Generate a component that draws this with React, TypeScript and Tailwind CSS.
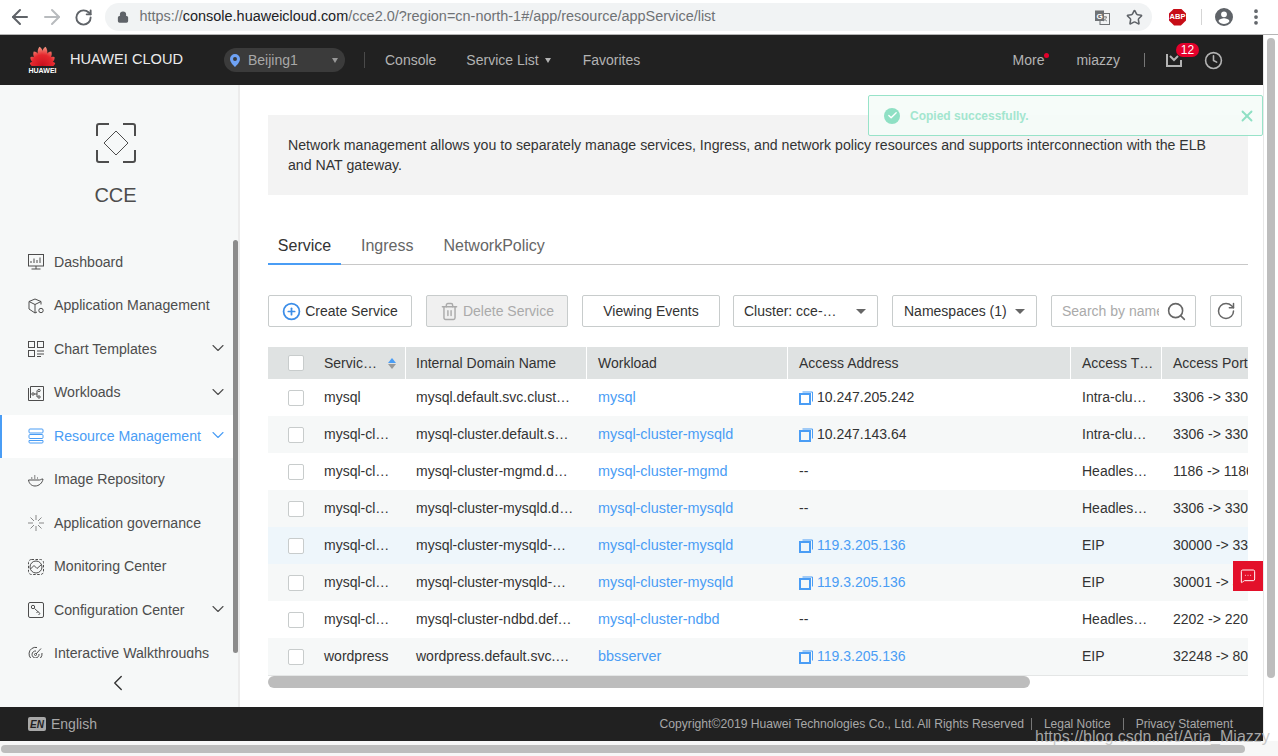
import { ArrowLeft, ArrowRight, ChevronDown, ChevronLeft, Clock, Lock, MoreVertical, RotateCw, Search, Star, Trash2, Check, X, MessageSquareMore, CirclePlus } from "lucide-react";

type IconProps = { className?: string };

function Svg({ className, children }: IconProps & { children: React.ReactNode }) {
  return (
    <svg viewBox="0 0 16 16" fill="none" stroke="currentColor" strokeWidth="1" className={className}>
      {children}
    </svg>
  );
}

const navItems: { label: string; chevron?: boolean; active?: boolean; icon: React.ReactNode }[] = [
  {
    label: "Dashboard",
    icon: <><rect x="0.5" y="0.5" width="15" height="11.5" /><path d="M3 9V7M6 9V4.500M9 9V6M12 9V3.500M8 12v3M3.500 15h9" /></>,
  },
  {
    label: "Application Management",
    icon: <><path d="M7 1 1 3.500v7.500L7 15l2-1M7 1l6 2.500v3M1 3.500 7 6.500l6-3M7 6.500V15" /><circle cx="13" cy="12.500" r="2.200" /></>,
  },
  {
    label: "Chart Templates",
    chevron: true,
    icon: <><rect x="0.500" y="0.500" width="6" height="6" /><rect x="9.500" y="0.500" width="6" height="6" /><rect x="0.500" y="9.500" width="6" height="6" /><path d="M9 10h7M9 13h7M9 15.500h4" /></>,
  },
  {
    label: "Workloads",
    chevron: true,
    icon: <><path d="M0.500 3V15.500H15.500V1.500H2.500V13" /><circle cx="5" cy="9" r="1.200" /><circle cx="11" cy="5.500" r="1.200" /><circle cx="11" cy="12" r="1.200" /><path d="M6 9h3V5.500M9 9v3" /></>,
  },
  {
    label: "Resource Management",
    chevron: true,
    active: true,
    icon: <><rect x="1" y="1" width="14" height="4" rx="1" /><rect x="1" y="6.500" width="14" height="4" rx="1" /><path d="M1 12.500h14v1.500a1 1 0 0 1-1 1H2a1 1 0 0 1-1-1z" /></>,
  },
  {
    label: "Image Repository",
    icon: <><path d="M0.500 8h11c1 0 1.500-1 3.500-1-.5 4-4 7-8 7-3.500 0-6-2.500-6.500-6z" /><path d="M3 6h2M6 6h2M6 4h2M9 6h1" strokeDasharray="1 .6" /></>,
  },
  {
    label: "Application governance",
    icon: <g opacity="0.65"><path d="M8 0v5M8 11v5M0 8h5M11 8h5M2.500 2.500 6 6M13.500 2.500 10 6M2.500 13.500 6 10M13.500 13.500 10 10" /></g>,
  },
  {
    label: "Monitoring Center",
    icon: <><rect x="0.500" y="0.500" width="15" height="15" rx="3" strokeDasharray="2.500 1.500" /><circle cx="8" cy="8" r="6" /><path d="M2.500 10 6 6.500 9 9.500l4.500-4" /></>,
  },
  {
    label: "Configuration Center",
    chevron: true,
    icon: <><rect x="0.500" y="0.500" width="15" height="15" rx="1.500" /><circle cx="5" cy="5" r="1.700" /><path d="M6.500 6.500 12 11.500M10 9.500 8.500 11M12 11.500 10.500 13" /></>,
  },
  {
    label: "Interactive Walkthroughs",
    icon: <><path d="M14 7a6.500 6.500 0 1 1-5-5.500" /><path d="M11 8a3.500 3.500 0 1 1-3-3" /><circle cx="7.500" cy="8.500" r="1" /><path d="m8 8 5-5.500" /></>,
  },
];

type Row = { name: string; domain: string; workload: string; addr?: string; link?: boolean; type: string; port: string; bg: string };

const rows: Row[] = [
  { name: "mysql", domain: "mysql.default.svc.clust…", workload: "mysql", addr: "10.247.205.242", type: "Intra-clu…", port: "3306 -> 3306", bg: "bg-white" },
  { name: "mysql-cl…", domain: "mysql-cluster.default.s…", workload: "mysql-cluster-mysqld", addr: "10.247.143.64", type: "Intra-clu…", port: "3306 -> 3306", bg: "bg-[#f6f8f8]" },
  { name: "mysql-cl…", domain: "mysql-cluster-mgmd.d…", workload: "mysql-cluster-mgmd", type: "Headles…", port: "1186 -> 1186", bg: "bg-white" },
  { name: "mysql-cl…", domain: "mysql-cluster-mysqld.d…", workload: "mysql-cluster-mysqld", type: "Headles…", port: "3306 -> 3306", bg: "bg-[#f6f8f8]" },
  { name: "mysql-cl…", domain: "mysql-cluster-mysqld-…", workload: "mysql-cluster-mysqld", addr: "119.3.205.136", link: true, type: "EIP", port: "30000 -> 3306", bg: "bg-[#eef6fb]" },
  { name: "mysql-cl…", domain: "mysql-cluster-mysqld-…", workload: "mysql-cluster-mysqld", addr: "119.3.205.136", link: true, type: "EIP", port: "30001 -> 3306", bg: "bg-[#f6f8f8]" },
  { name: "mysql-cl…", domain: "mysql-cluster-ndbd.def…", workload: "mysql-cluster-ndbd", type: "Headles…", port: "2202 -> 2202", bg: "bg-white" },
  { name: "wordpress", domain: "wordpress.default.svc.…", workload: "bbsserver", addr: "119.3.205.136", link: true, type: "EIP", port: "32248 -> 80", bg: "bg-[#f6f8f8]" },
];

const petals: { angle: number; len: number }[] = [
  { angle: -78, len: 13 },
  { angle: -54, len: 15 },
  { angle: -31, len: 17 },
  { angle: -9, len: 19.500 },
  { angle: 9, len: 19.500 },
  { angle: 31, len: 17 },
  { angle: 54, len: 15 },
  { angle: 78, len: 13 },
];

function HuaweiLogo() {
  return (
    <svg viewBox="0 0 27 20" className="h-[20px] w-[27px]">
      <defs>
        <linearGradient id="petal" x1="0" y1="0" x2="0" y2="20" gradientUnits="userSpaceOnUse">
          <stop offset="0" stopColor="#f4a48c" />
          <stop offset="0.45" stopColor="#e5282e" />
          <stop offset="1" stopColor="#c80f1c" />
        </linearGradient>
      </defs>
      {petals.map((p) => (
        <path
          key={p.angle}
          d={`M13.500 20C9.500 ${20 - p.len * 0.5} 10 ${20 - p.len * 0.85} 13.500 ${20 - p.len}C17 ${20 - p.len * 0.85} 17.500 ${20 - p.len * 0.5} 13.500 20z`}
          fill="url(#petal)"
          transform={`rotate(${p.angle} 13.500 20)`}
        />
      ))}
    </svg>
  );
}

function Checkbox() {
  return <span className="block h-[16px] w-[16px] rounded-[2px] border border-[#c8cccc] bg-white" />;
}

function CopyIcon() {
  return (
    <svg viewBox="0 0 14 14" fill="none" stroke="#4a9df5" className="mr-[4px] h-[14px] w-[14px] shrink-0">
      <path d="M3.500 1h10v9.500" />
      <rect x="1" y="3" width="10" height="10" strokeWidth="2" />
    </svg>
  );
}

function Caret() {
  return <span className="h-0 w-0 border-x-[5px] border-t-[5px] border-x-transparent border-t-[#666]" />;
}

function App() {
  return (
    <div className="relative flex h-[756px] w-[1278px] flex-col overflow-hidden bg-white font-['Liberation_Sans',Arial,sans-serif] text-[14px] text-[#333]">
      {/* browser chrome */}
      <div className="flex h-[35px] shrink-0 items-center border-b border-[#b5b5b5] bg-white pl-[8px]">
        <ArrowLeft className="h-[24px] w-[24px] text-[#5f6368]" strokeWidth={2} />
        <ArrowRight className="ml-[8px] h-[24px] w-[24px] text-[#b8bbbe]" strokeWidth={2} />
        <RotateCw className="ml-[10px] h-[19px] w-[19px] text-[#5f6368]" strokeWidth={2.400} />
        <div className="ml-[12px] flex h-[28px] w-[1047px] items-center rounded-full bg-[#f1f3f4] pl-[12px] pr-[9px]">
          <Lock className="h-[12px] w-[12px] fill-[#5f6368] text-[#5f6368]" strokeWidth={2.500} />
          <span className="ml-[10.500px] flex-1 whitespace-nowrap text-[14.450px] text-[#6f7275]">
            https://<span className="text-[#202124]">console.huaweicloud.com</span>/cce2.0/?region=cn-north-1#/app/resource/appService/list
          </span>
          <svg viewBox="0 0 15 15" className="h-[15px] w-[15px]">
            <rect x="5" y="3.500" width="9.500" height="11" fill="#f1f3f4" stroke="#6f7275" />
            <path d="M8 7h4M10 6v1M11.500 7c-.5 2-2 3.500-3.500 4M9 8.500c.5 1 1.500 2 3 2.500" stroke="#6f7275" strokeWidth="0.800" fill="none" />
            <rect x="0" y="0.500" width="9" height="10.500" fill="#6f7275" />
            <text x="4.500" y="8.500" textAnchor="middle" fontSize="8" fontWeight="700" fill="#fff">G</text>
          </svg>
          <Star className="ml-[16.500px] h-[17px] w-[17px] text-[#5f6368]" strokeWidth={2.200} />
        </div>
        <span className="ml-[17px] flex h-[17px] w-[17px] items-center justify-center bg-[#c70d17] text-[7.500px] font-bold text-white [clip-path:polygon(30%_0,70%_0,100%_30%,100%_70%,70%_100%,30%_100%,0_70%,0_30%)]">ABP</span>
        <span className="ml-[15px] h-[16px] w-px bg-[#d5d5d5]" />
        <svg viewBox="0 0 16 16" className="ml-[13px] h-[18px] w-[18px] fill-[#5f6368]">
          <path fillRule="evenodd" d="M8 0a8 8 0 1 0 0 16A8 8 0 0 0 8 0zm0 3a2.600 2.600 0 1 1 0 5.200A2.600 2.600 0 0 1 8 3zm0 11.200c-2 0-3.800-1-4.800-2.500 0-1.600 3.200-2.500 4.800-2.500s4.800.900 4.800 2.500c-1 1.500-2.800 2.500-4.800 2.500z" />
        </svg>
        <MoreVertical className="ml-[13px] h-[20px] w-[20px] text-[#5f6368]" strokeWidth={2.500} />
      </div>

      <div className="flex min-h-0 flex-1">
        <div className="flex min-w-0 flex-1 flex-col">
          {/* console header */}
          <header className="flex h-[50px] shrink-0 items-center bg-[#212121] text-[14px] text-[#b3b3b3]">
            <div className="ml-[29px] flex w-[27px] flex-col items-center">
              <HuaweiLogo />
              <span className="mt-[1px] text-[7px] font-bold leading-[7px] text-white">HUAWEI</span>
            </div>
            <span className="ml-[14px] whitespace-nowrap text-[14.600px] text-[#ececec]">HUAWEI CLOUD</span>
            <div className="ml-[41px] flex h-[24px] w-[121px] items-center rounded-full bg-[#3b3b3b] pl-[6px]">
              <svg viewBox="0 0 10 13" className="h-[13px] w-[10px]">
                <path fillRule="evenodd" fill="#6ea2f5" d="M5 0a5 5 0 0 1 5 5c0 3-3 6-5 8-2-2-5-5-5-8a5 5 0 0 1 5-5zm0 3a2 2 0 1 0 0 4 2 2 0 0 0 0-4z" />
              </svg>
              <span className="ml-[8px] flex-1 text-[#a8a8a8]">Beijing1</span>
              <span className="mr-[7px] h-0 w-0 border-x-[3.500px] border-t-[5px] border-x-transparent border-t-[#999]" />
            </div>
            <span className="ml-[19px] h-[16px] w-px bg-[#4a4a4a]" />
            <span className="ml-[20px]">Console</span>
            <span className="ml-[30px]">Service List</span>
            <span className="ml-[6px] h-0 w-0 border-x-[3.500px] border-t-[5px] border-x-transparent border-t-[#b3b3b3]" />
            <span className="ml-[32px]">Favorites</span>
            <div className="flex-1" />
            <span className="relative">
              More
              <span className="absolute -right-[5px] top-[3px] h-[5px] w-[5px] rounded-full bg-[#e4002b]" />
            </span>
            <span className="ml-[32px]">miazzy</span>
            <span className="ml-[24px] h-[14px] w-px bg-[#777]" />
            <span className="relative ml-[21px] flex">
              <svg viewBox="0 0 16 14" fill="none" stroke="#b3b3b3" strokeWidth="2" className="h-[14px] w-[16px]">
                <path d="M1 1v12h14V7M4 3l4 4 4-4" />
              </svg>
              <span className="absolute -top-[10px] left-[10px] flex h-[14px] w-[23px] items-center justify-center rounded-full bg-[#e4002b] text-[12px] text-white">12</span>
            </span>
            <Clock className="ml-[22px] mr-[40px] h-[19px] w-[19px] text-[#b3b3b3]" strokeWidth={2} />
          </header>

          <div className="flex min-h-0 flex-1">
            {/* sidebar */}
            <aside className="relative flex w-[240px] shrink-0 flex-col border-r-[2px] border-[#ececec] bg-[#f6f8f8]">
              <div className="flex h-[155.500px] shrink-0 flex-col items-center pr-[7px] pt-[38px]">
                <svg viewBox="0 0 40 40" fill="none" stroke="#4d4d4d" className="h-[40px] w-[40px]">
                  <path strokeWidth="2" d="M13 1H3a2 2 0 0 0-2 2v10M27 1h10a2 2 0 0 1 2 2v10M1 27v10a2 2 0 0 0 2 2h10M39 27v10a2 2 0 0 1-2 2H27" />
                  <path strokeWidth="1" d="M20 8 32 20 20 32 8 20z" />
                </svg>
                <span className="mt-[20px] text-[20px] leading-[24px] text-[#4d4d4d]">CCE</span>
              </div>
              <nav className="flex h-[417.500px] shrink-0 flex-col overflow-hidden text-[14.150px]">
                {navItems.map((item) => (
                  <div
                    key={item.label}
                    className={
                      item.active
                        ? "flex h-[43.500px] shrink-0 items-center border-l-[2px] border-[#4a9df5] bg-white pl-[26px] text-[#4a9df5]"
                        : "flex h-[43.500px] shrink-0 items-center pl-[28px] text-[#4d4d4d]"
                    }
                  >
                    <Svg className="h-[16px] w-[16px] shrink-0">{item.icon}</Svg>
                    <span className="ml-[10px] flex-1 whitespace-nowrap">{item.label}</span>
                    {item.chevron && <ChevronDown className="-mt-[2px] mr-[10px] h-[20px] w-[20px]" strokeWidth={1.300} />}
                  </div>
                ))}
              </nav>
              <div className="flex flex-1 items-center justify-center pr-[3px]">
                <ChevronLeft className="h-[26px] w-[26px] text-[#333]" strokeWidth={1.300} />
              </div>
              <span className="absolute right-[0px] top-[155px] h-[413px] w-[5px] rounded-full bg-[#8c8c8c]" />
            </aside>

            {/* content */}
            <main className="min-w-0 flex-1 pl-[28px] pr-[15px] pt-[30px]">
              <div className="h-[80px] bg-[#f3f3f3] pl-[20px] pr-[36px] pt-[20px] text-[14.150px] leading-[20px]">
                Network management allows you to separately manage services, Ingress, and network policy resources and supports interconnection with the ELB and NAT gateway.
              </div>

              <div className="mt-[34px] flex h-[36px] items-end border-b border-[#c8c8c8] text-[16px] text-[#666]">
                <span className="-mb-px flex h-[36px] w-[73px] items-center justify-center border-b-[2px] border-[#4a9df5] text-[#333]">Service</span>
                <span className="mb-[1px] ml-[20px] flex h-[35px] items-center">Ingress</span>
                <span className="mb-[1px] ml-[30px] flex h-[35px] items-center">NetworkPolicy</span>
              </div>

              {/* toolbar */}
              <div className="mt-[30px] flex h-[32px] items-stretch">
                <button className="flex w-[144px] items-center justify-center rounded-[2px] border border-[#c8cccc] bg-white">
                  <CirclePlus className="mr-[4px] h-[19px] w-[19px] text-[#3b8de8]" strokeWidth={2.200} />
                  Create Service
                </button>
                <button className="ml-[14px] flex w-[142px] items-center justify-center rounded-[2px] border border-[#c8cccc] bg-[#f0f0f0] text-[#aaa]">
                  <Trash2 className="mr-[4px] h-[19px] w-[19px]" strokeWidth={1.800} />
                  Delete Service
                </button>
                <button className="ml-[14px] w-[138px] rounded-[2px] border border-[#c8cccc] bg-white">Viewing Events</button>
                <button className="ml-[13px] flex w-[145px] items-center justify-between rounded-[2px] border border-[#c8cccc] bg-white pl-[10px] pr-[11px]">
                  Cluster: cce-…
                  <Caret />
                </button>
                <button className="ml-[14px] flex w-[145px] items-center justify-between rounded-[2px] border border-[#c8cccc] bg-white pl-[11px] pr-[11px]">
                  Namespaces (1)
                  <Caret />
                </button>
                <div className="ml-[14px] flex w-[145px] items-center rounded-[2px] border border-[#c8cccc] bg-white pl-[10px]">
                  <span className="w-[97px] overflow-hidden whitespace-nowrap text-[#aaa]">Search by name</span>
                  <Search className="ml-[7px] h-[21px] w-[21px] text-[#666]" strokeWidth={1.800} />
                </div>
                <button className="ml-[14px] flex w-[32px] items-center justify-center rounded-[2px] border border-[#c8cccc] bg-white">
                  <RotateCw className="h-[20px] w-[20px] text-[#666]" strokeWidth={1.800} />
                </button>
              </div>

              {/* table */}
              <div className="mt-[20px] overflow-hidden border-b border-[#e4e6e6]">
                <div className="grid w-[1060px] grid-cols-[44px_94px_181px_201px_283px_91px_166px]">
                  <div className="flex h-[32px] items-center bg-[#dfe2e2] pl-[20px]"><Checkbox /></div>
                  <div className="flex h-[32px] items-center border-r border-white bg-[#dfe2e2] pl-[12px]">
                    <span>Servic…</span>
                    <span className="ml-[11px] flex flex-col gap-[1px]">
                      <span className="h-0 w-0 border-x-[4px] border-b-[5px] border-x-transparent border-b-[#4a9df5]" />
                      <span className="h-0 w-0 border-x-[4px] border-t-[5px] border-x-transparent border-t-[#999]" />
                    </span>
                  </div>
                  <div className="flex h-[32px] items-center border-r border-white bg-[#dfe2e2] pl-[10px]">Internal Domain Name</div>
                  <div className="flex h-[32px] items-center border-r border-white bg-[#dfe2e2] pl-[11px]">Workload</div>
                  <div className="flex h-[32px] items-center border-r border-white bg-[#dfe2e2] pl-[11px]">Access Address</div>
                  <div className="flex h-[32px] items-center border-r border-white bg-[#dfe2e2] pl-[11px]">Access T…</div>
                  <div className="flex h-[32px] items-center bg-[#dfe2e2] pl-[11px]">Access Port</div>

                  {rows.map((r, i) => (
                    <div key={i} className="contents">
                      <div className={`flex h-[37px] items-center pl-[20px] ${r.bg}`}><Checkbox /></div>
                      <div className={`flex h-[37px] items-center whitespace-nowrap pl-[12px] ${r.bg}`}>{r.name}</div>
                      <div className={`flex h-[37px] items-center whitespace-nowrap pl-[10px] ${r.bg}`}>{r.domain}</div>
                      <div className={`flex h-[37px] items-center pl-[11px] text-[14.400px] text-[#4a9df5] ${r.bg}`}>{r.workload}</div>
                      <div className={`flex h-[37px] items-center pl-[11px] ${r.bg}`}>
                        {r.addr ? (
                          <>
                            <CopyIcon />
                            <span className={r.link ? "text-[#4a9df5]" : ""}>{r.addr}</span>
                          </>
                        ) : (
                          "--"
                        )}
                      </div>
                      <div className={`flex h-[37px] items-center whitespace-nowrap pl-[11px] ${r.bg}`}>{r.type}</div>
                      <div className={`flex h-[37px] items-center whitespace-nowrap pl-[11px] ${r.bg}`}>{r.port}</div>
                    </div>
                  ))}
                </div>
              </div>
              <div className="h-[12px] w-[762px] rounded-full bg-[#bdbdbd]" />
            </main>
          </div>

          {/* footer */}
          <footer className="flex h-[34px] shrink-0 items-center bg-[#212121] pl-[28px] text-[#a8a8a8]">
            <span className="flex h-[14px] w-[18px] items-center justify-center rounded-[2px] bg-[#a8a8a8] text-[10px] font-bold italic text-[#212121]">EN</span>
            <span className="ml-[5px]">English</span>
            <div className="flex-1" />
            <span className="text-[12.150px]">Copyright©2019 Huawei Technologies Co., Ltd. All Rights Reserved</span>
            <span className="ml-[7px] h-[12px] w-px bg-[#777]" />
            <span className="ml-[12px] text-[12px]">Legal Notice</span>
            <span className="ml-[12px] h-[12px] w-px bg-[#777]" />
            <span className="ml-[12px] mr-[30px] text-[12px]">Privacy Statement</span>
          </footer>
        </div>

        {/* page scrollbar */}
        <div className="w-[15px] shrink-0 border-l border-[#e8e8e8] bg-white pl-[3px] pt-[3px]">
          <div className="h-[640px] w-[8px] rounded-full bg-[#bdbdbd]" />
        </div>
      </div>

      <div className="flex h-[15px] shrink-0 items-center bg-[#f7f7f7] pl-[1px]">
        <div className="h-[8px] w-[1244px] rounded-full bg-[#bdbdbd]" />
      </div>

      {/* overlays */}
      <div className="absolute left-[868px] top-[95px] flex h-[41px] w-[395px] items-center rounded-[2px] border border-[#98e3c9] bg-[#f4fbf8]/85 pl-[15px] pr-[6px]">
        <span className="flex h-[16px] w-[16px] items-center justify-center rounded-full bg-[#8fe0c4]">
          <Check className="h-[11px] w-[11px] text-white" strokeWidth={3} />
        </span>
        <span className="ml-[10px] flex-1 text-[12px] font-bold text-[#a3e6cf]">Copied successfully.</span>
        <X className="h-[18px] w-[18px] text-[#8fe0c4]" strokeWidth={2.500} />
      </div>

      <div className="absolute left-[1233px] top-[561px] flex h-[30px] w-[30px] items-center justify-center bg-[#e3102a]">
        <MessageSquareMore className="h-[16px] w-[16px] text-white" strokeWidth={1.500} />
      </div>

      <span className="absolute left-[1035px] top-[727px] whitespace-nowrap text-[16px] leading-[20px] text-[#bfbfbf]/85">https://blog.csdn.net/Aria_Miazzy</span>
    </div>
  );
}

export default App;
